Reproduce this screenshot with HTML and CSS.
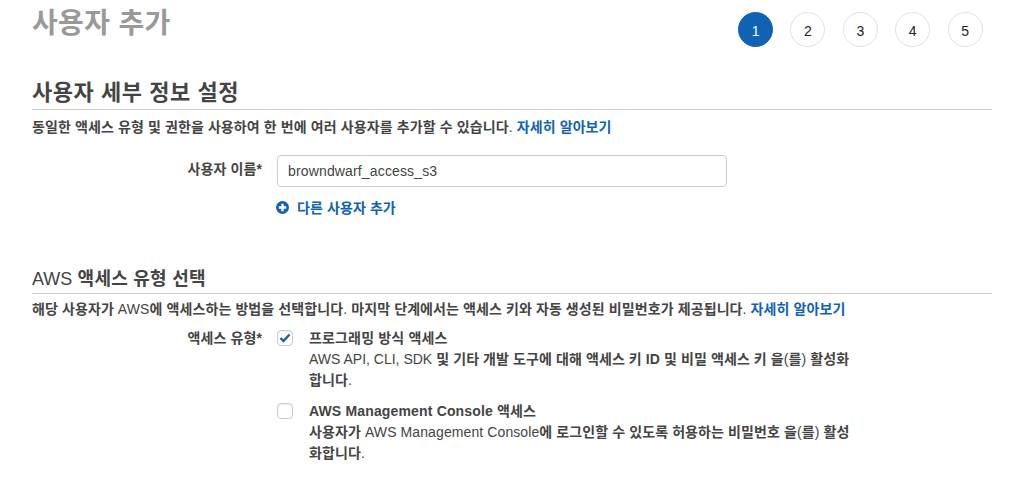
FILE: index.html
```html
<!DOCTYPE html>
<html lang="ko">
<head>
  <meta charset="UTF-8">
  <title>사용자 추가</title>
  <link rel="stylesheet" href="styles.css">
</head>
<body>

  <div class="wizard">
    <div class="wizard-head">
      <h1 class="page-title">사용자 추가</h1>
      <div class="steps">
        <div class="step active">1</div>
        <div class="step">2</div>
        <div class="step">3</div>
        <div class="step">4</div>
        <div class="step">5</div>
      </div>
    </div>

    <h2 class="section-title first">사용자 세부 정보 설정</h2>
    <p class="section-desc first">동일한 액세스 유형 및 권한을 사용하여 한 번에 여러 사용자를 추가할 수 있습니다<span class="plain">.</span> <a href="#">자세히 알아보기</a></p>

    <div class="form-row name-row">
      <div class="form-label">사용자 이름*</div>
      <input class="text-input" type="text" value="browndwarf_access_s3">
    </div>
    <div class="add-row">
      <svg class="plus-icon" width="13" height="13" viewBox="0 0 13 13">
        <circle cx="6.5" cy="6.5" r="6.5" fill="#0f62b4"/>
        <path d="M6.5 2.8v7.4M2.8 6.5h7.4" stroke="#fff" stroke-width="2.4"/>
      </svg>
      <a href="#">다른 사용자 추가</a>
    </div>

    <h2 class="section-title second"><span class="plain">AWS</span> 액세스 유형 선택</h2>
    <p class="section-desc">해당 사용자가 <span class="plain">AWS</span>에 액세스하는 방법을 선택합니다<span class="plain">.</span> 마지막 단계에서는 액세스 키와 자동 생성된 비밀번호가 제공됩니다<span class="plain">.</span> <a href="#">자세히 알아보기</a></p>

    <div class="form-row type-row">
      <div class="form-label">액세스 유형*</div>
      <div class="options">
        <div class="option">
          <span class="checkbox">
            <svg width="12" height="10" viewBox="0 0 12 10">
              <path d="M1.5 5l3 3 6-6.5" fill="none" stroke="#0f62b4" stroke-width="2.4"/>
            </svg>
          </span>
          <div class="option-text">
            <strong>프로그래밍 방식 액세스</strong>
            <p><span class="plain tight">AWS API, CLI, SDK</span> 및 기타 개발 도구에 대해 액세스 키 ID 및 비밀 액세스 키 을<span class="plain">(</span>를<span class="plain">)</span> 활성화<br>합니다<span class="plain">.</span></p>
          </div>
        </div>
        <div class="option">
          <span class="checkbox"></span>
          <div class="option-text">
            <strong>AWS Management Console 액세스</strong>
            <p>사용자가 <span class="plain">AWS Management Console</span>에 로그인할 수 있도록 허용하는 비밀번호 을<span class="plain">(</span>를<span class="plain">)</span> 활성<br>화합니다<span class="plain">.</span></p>
          </div>
        </div>
      </div>
    </div>
  </div>

</body>
</html>
```

FILE: styles.css
```css
body {
  margin: 0;
  background: #fff;
  color: #444;
  font-family: "Liberation Sans", "Noto Sans CJK KR", sans-serif;
  font-size: 14px;
  line-height: 21px;
  letter-spacing: 0.1px;
  overflow: hidden;
}

a {
  color: #0f62b4;
  font-weight: bold;
  text-decoration: none;
}

.plain {
  font-weight: normal;
}

.tight {
  letter-spacing: 0;
}

.wizard {
  width: 960px;
  margin-left: 32px;
}

.wizard-head {
  display: flex;
  justify-content: space-between;
  height: 78px;
}

.page-title {
  margin: 0;
  color: #999;
  font-size: 28px;
  line-height: 48px;
  font-weight: bold;
  letter-spacing: 0.35px;
}

.steps {
  display: flex;
  gap: 17.4px;
  margin: 12px 9.4px 0 0;
}

.step {
  box-sizing: border-box;
  width: 35px;
  height: 35px;
  border: 1px solid #e1e1e1;
  border-radius: 50%;
  color: #222;
  text-align: center;
  line-height: 37px;
  letter-spacing: 0;
}

.step.active {
  background: #0f62b4;
  border-color: #0f62b4;
  color: #fff;
}

.section-title {
  margin: 0;
  border-bottom: 1px solid #ccc;
  font-weight: bold;
}

.section-title.first {
  padding-bottom: 1px;
  font-size: 22px;
  line-height: 30px;
  letter-spacing: 0.55px;
}

.section-title.second {
  margin-top: 46px;
  font-size: 18px;
  line-height: 28px;
  letter-spacing: 0.25px;
}

.section-title.second .plain {
  letter-spacing: 0;
}

.section-desc {
  margin: 5px 0 0;
  font-weight: bold;
}

.section-desc.first {
  margin-top: 7px;
  letter-spacing: 0.11px;
}

.form-row {
  display: flex;
  align-items: flex-start;
}

.form-label {
  width: 230px;
  margin-right: 15px;
  text-align: right;
  font-weight: bold;
}

.name-row {
  margin-top: 17px;
}

.name-row .form-label {
  line-height: 29px;
}

.text-input {
  box-sizing: border-box;
  width: 450px;
  height: 32px;
  padding: 0 10px;
  border: 1px solid #ccc;
  border-radius: 4px;
  color: #444;
  font: 14px "Liberation Sans", sans-serif;
  letter-spacing: 0.15px;
}

.add-row {
  display: flex;
  align-items: center;
  gap: 8px;
  margin: 11px 0 0 244px;
}

.plus-icon {
  margin-bottom: 2px;
}

.type-row {
  margin-top: 8px;
}

.options {
  display: flex;
  flex-direction: column;
  gap: 10px;
  width: 590px;
}

.option {
  display: flex;
  gap: 16px;
}

.checkbox {
  box-sizing: border-box;
  flex: none;
  display: flex;
  align-items: center;
  justify-content: center;
  width: 16px;
  height: 16px;
  margin-top: 2px;
  border: 1px solid #ccc;
  border-radius: 4px;
  box-shadow: inset 0 1px 2px rgba(0, 0, 0, 0.08);
}

.option-text strong {
  letter-spacing: 0.16px;
}

.option-text p {
  margin: 0;
  font-weight: bold;
}
```
